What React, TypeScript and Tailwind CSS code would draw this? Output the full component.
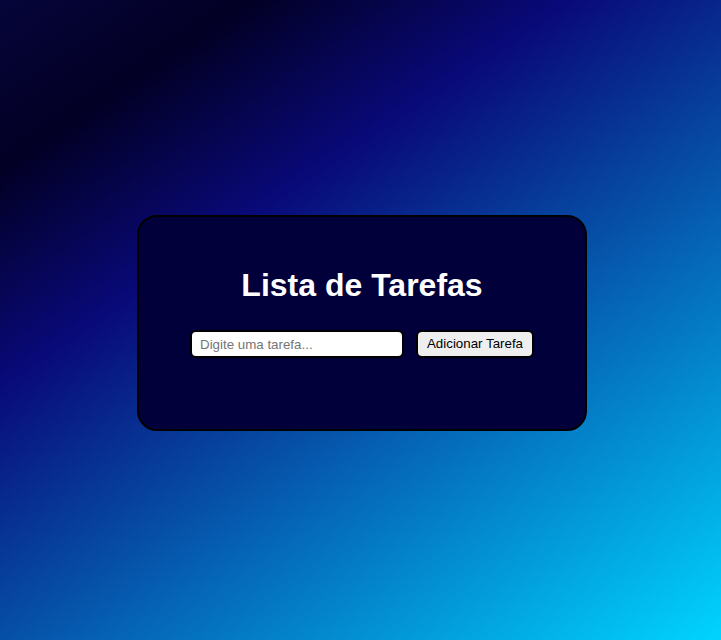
function App() {
  return (
    <div className="min-h-screen flex items-center justify-center pt-[6px] pl-[3px] bg-[linear-gradient(146deg,#06053a_0%,#020024_15%,#090979_34%,#00d4ff_100%)] font-['Liberation_Sans',Arial,sans-serif]">
      <div className="w-[450px] h-[216px] rounded-[20px] border-2 border-black bg-[#02003a] pt-[50px] flex flex-col items-center">
        <h1 className="text-[32px] leading-[37px] font-bold text-white">Lista de Tarefas</h1>
        <div className="mt-[26px] flex items-center gap-[12px]">
          <input
            type="text"
            placeholder="Digite uma tarefa..."
            className="w-[214px] h-[28px] rounded-[6px] border-2 border-black bg-white px-[8px] text-[13.333px] text-black placeholder:text-[#757575] outline-none"
          />
          <button className="w-[118px] h-[28px] rounded-[6px] border-2 border-black bg-[#efefef] text-[13.333px] text-black">
            Adicionar Tarefa
          </button>
        </div>
      </div>
    </div>
  )
}

export default App
